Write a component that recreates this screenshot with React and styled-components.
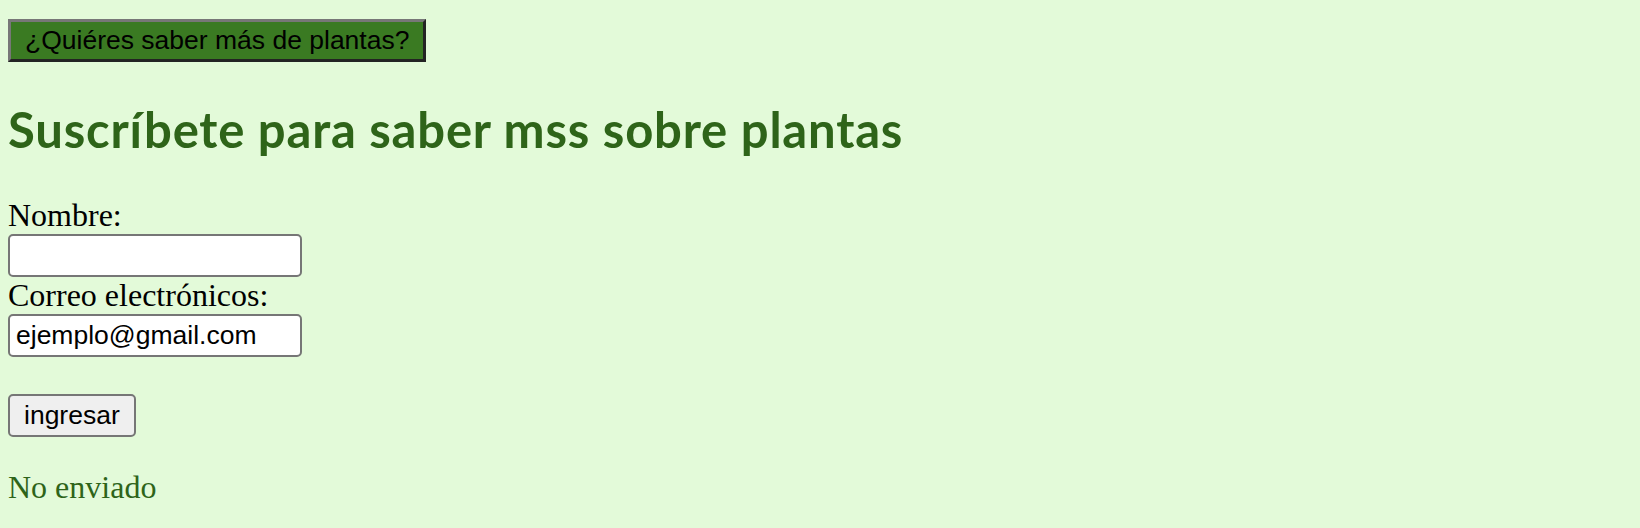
import React from 'react'
import styled, { createGlobalStyle } from 'styled-components'

const GlobalStyle = createGlobalStyle`
  body {
    margin: 8px;
    background: #e3fad9;
    font-family: "Liberation Serif", "Times New Roman", serif;
    font-size: 32px;
    color: #000;
  }
`

const Page = styled.div`
  display: flex;
  flex-direction: column;
  align-items: flex-start;
`

const MoreButton = styled.button`
  margin-top: 11px;
  height: 43px;
  padding: 0 14px;
  box-sizing: border-box;
  background: #3a7a22;
  color: #000;
  font-family: "Liberation Sans", Arial, sans-serif;
  font-size: 26.5px;
  border: 3px solid;
  border-color: #777777 #232323 #232323 #777777;
  cursor: pointer;
`

const Title = styled.h2`
  margin: 39px 0 40px;
  height: 56px;
  line-height: 56px;
  font-family: Lato, "Open Sans", sans-serif;
  font-weight: 700;
  font-size: 49px;
  letter-spacing: 0.8px;
  color: #2e6419;
  white-space: nowrap;
`

const Form = styled.form`
  display: flex;
  flex-direction: column;
  align-items: flex-start;
`

const Label = styled.label`
  display: block;
  height: 37px;
  line-height: 37px;
`

const TextInput = styled.input`
  width: 294px;
  height: 43px;
  box-sizing: border-box;
  margin: 0;
  padding: 0 6px;
  border: 2px solid #767676;
  border-radius: 5px;
  background: #fff;
  font-family: "Liberation Sans", Arial, sans-serif;
  font-size: 26.5px;
  color: #000;
`

const Submit = styled.button`
  margin-top: 37px;
  height: 43px;
  box-sizing: border-box;
  padding: 0 14px;
  border: 2px solid #767676;
  border-radius: 5px;
  background: #efefef;
  color: #000;
  font-family: "Liberation Sans", Arial, sans-serif;
  font-size: 26.5px;
`

const Status = styled.p`
  margin: 32px 0 0;
  line-height: 37px;
  color: #2e6419;
`

export default function App() {
  return (
    <>
      <GlobalStyle />
      <Page>
        <MoreButton type="button">¿Quiéres saber más de plantas?</MoreButton>
        <Title>Suscríbete para saber mss sobre plantas</Title>
        <Form onSubmit={e => e.preventDefault()}>
          <Label htmlFor="nombre">Nombre:</Label>
          <TextInput id="nombre" type="text" />
          <Label htmlFor="correo">Correo electrónicos:</Label>
          <TextInput id="correo" type="email" defaultValue="ejemplo@gmail.com" />
          <Submit type="submit">ingresar</Submit>
        </Form>
        <Status>No enviado</Status>
      </Page>
    </>
  )
}
